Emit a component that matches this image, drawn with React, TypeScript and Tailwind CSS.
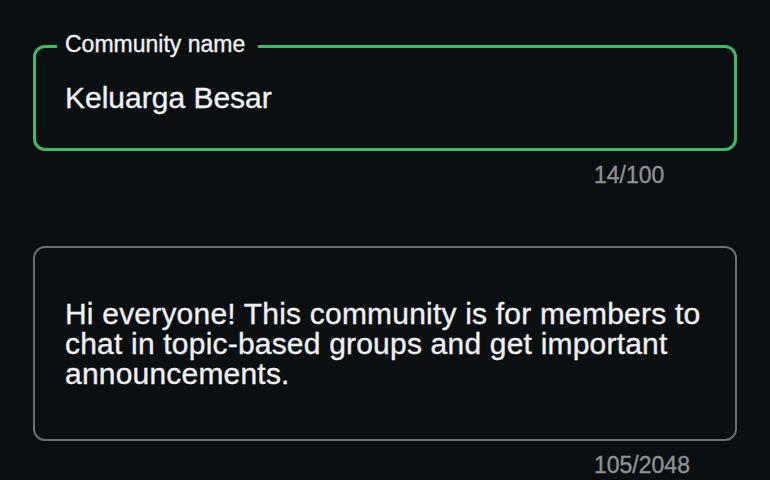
export default function App() {
  return (
    <div
      className="w-[770px] h-[480px] overflow-hidden bg-[#0b0f12] px-[33px] pt-[45px] [-webkit-text-stroke:0.35px_currentColor]"
      style={{ fontFamily: '"Liberation Sans", Arial, sans-serif' }}
    >
      <div className="relative rounded-[12px] border-[3px] border-[#3cba68] pl-[29px] pr-[29px] pt-[35px] pb-[35px]">
        <span className="absolute left-[21px] top-[-15px] bg-[#0b0f12] pl-[8px] pr-[13px] text-[23px] leading-[23px] text-[#eef0f1]">
          Community name
        </span>
        <div className="text-[30px] leading-[30px] text-[#eef0f1]">Keluarga Besar</div>
      </div>
      <div className="mt-[13px] pl-[561px] text-[23px] leading-[23px] text-[#8e9194]">14/100</div>

      <div className="mt-[59px] rounded-[12px] border-2 border-[#6c6f72] pl-[30px] pr-[28px] pt-[51px] pb-[50px]">
        <div className="text-[30px] leading-[30px] tracking-[0.2px] text-[#eef0f1]">
          Hi everyone! This community is for members to chat in topic-based groups and get important
          announcements.
        </div>
      </div>
      <div className="mt-[13px] pl-[561px] text-[23px] leading-[23px] text-[#8e9194]">105/2048</div>
    </div>
  );
}
